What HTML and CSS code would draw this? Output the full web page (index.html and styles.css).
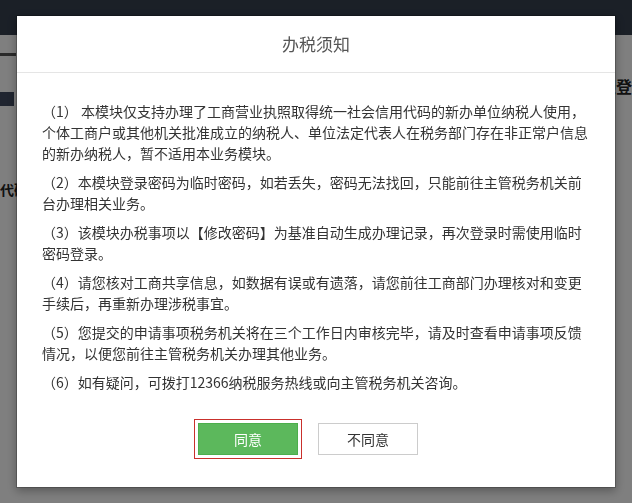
FILE: index.html
```html
<!DOCTYPE html>
<html lang="zh-CN">
<head>
    <meta charset="UTF-8">
    <meta name="viewport" content="width=device-width, initial-scale=1.0">
    <title>办税须知</title>
    <link rel="stylesheet" href="styles.css">
</head>
<body>
    <div class="page">
        <div class="topbar"></div>
        <div class="banner">
            <div class="banner-left">
                <div class="rule"></div>
                <div class="mark"></div>
            </div>
            <div class="banner-right">欢迎登录</div>
        </div>
        <div class="form-row">
            <span class="form-label">信用代码</span>
        </div>
    </div>

    <div class="backdrop"></div>

    <div class="modal">
        <div class="modal-header">
            <h4 class="modal-title">办税须知</h4>
        </div>
        <div class="modal-body">
            <p>（1） 本模块仅支持办理了工商营业执照取得统一社会信用代码的新办单位纳税人使用，个体工商户或其他机关批准成立的纳税人、单位法定代表人在税务部门存在非正常户信息的新办纳税人，暂不适用本业务模块。</p>
            <p>（2）本模块登录密码为临时密码，如若丢失，密码无法找回，只能前往主管税务机关前台办理相关业务。</p>
            <p>（3）该模块办税事项以【修改密码】为基准自动生成办理记录，再次登录时需使用临时密码登录。</p>
            <p>（4）请您核对工商共享信息，如数据有误或有遗落，请您前往工商部门办理核对和变更手续后，再重新办理涉税事宜。</p>
            <p>（5）您提交的申请事项税务机关将在三个工作日内审核完毕，请及时查看申请事项反馈情况，以便您前往主管税务机关办理其他业务。</p>
            <p>（6）如有疑问，可拨打12366纳税服务热线或向主管税务机关咨询。</p>
        </div>
        <div class="modal-footer">
            <button type="button" class="btn btn-agree">同意</button>
            <button type="button" class="btn btn-cancel">不同意</button>
        </div>
    </div>
</body>
</html>
```

FILE: styles.css
```css
* {
    margin: 0;
    padding: 0;
    box-sizing: border-box;
    font-family: "Noto Sans CJK SC", "Microsoft YaHei", sans-serif;
}

body {
    width: 632px;
    height: 503px;
    overflow: hidden;
    background: #fff;
}

.page {
    width: 632px;
}

.topbar {
    height: 35px;
    background: #36404f;
}

.banner {
    height: 57px;
    display: flex;
    justify-content: space-between;
    align-items: flex-start;
}

.rule {
    width: 16px;
    height: 3px;
    margin-top: 18px;
    background: #555;
}

.mark {
    width: 14px;
    height: 14px;
    margin-top: 36px;
    background: #404a60;
}

.banner-right {
    margin-top: 39px;
    margin-right: -16px;
    font-size: 16px;
    font-weight: 700;
    color: #222;
    white-space: nowrap;
}

.form-row {
    margin-top: 84px;
}

.form-label {
    display: inline-block;
    margin-left: -28px;
    font-size: 14px;
    font-weight: 700;
    color: #222;
    white-space: nowrap;
}

.backdrop {
    position: fixed;
    top: 0;
    left: 0;
    right: 0;
    bottom: 0;
    background: #000;
    opacity: 0.5;
}

.modal {
    position: fixed;
    top: 15px;
    left: 16px;
    width: 600px;
    background: #fff;
    background-clip: padding-box;
    border: 1px solid rgba(0, 0, 0, 0.2);
    box-shadow: 0 3px 9px rgba(0, 0, 0, 0.3);
}

.modal-header {
    padding: 15px;
    border-bottom: 1px solid #e5e5e5;
    text-align: center;
}

.modal-title {
    font-size: 17px;
    font-weight: 400;
    line-height: 26px;
    color: #555;
}

.modal-body {
    padding: 28px 25px 0;
}

.modal-body p {
    font-size: 14px;
    line-height: 21px;
    color: #333;
    margin-bottom: 8px;
}

.modal-body p:last-child {
    margin-bottom: 0;
}

.modal-footer {
    display: flex;
    justify-content: center;
    gap: 20px;
    padding: 30px 16px 32px 0;
}

.btn {
    width: 100px;
    height: 32px;
    border-radius: 0;
    font-size: 14px;
    cursor: pointer;
}

.btn-agree {
    background: #5cb85c;
    border: 1px solid #4cae4c;
    color: #fff;
    outline: 1px solid #c9302c;
    outline-offset: 3px;
}

.btn-cancel {
    background: #fff;
    border: 1px solid #ccc;
    color: #333;
}
```
